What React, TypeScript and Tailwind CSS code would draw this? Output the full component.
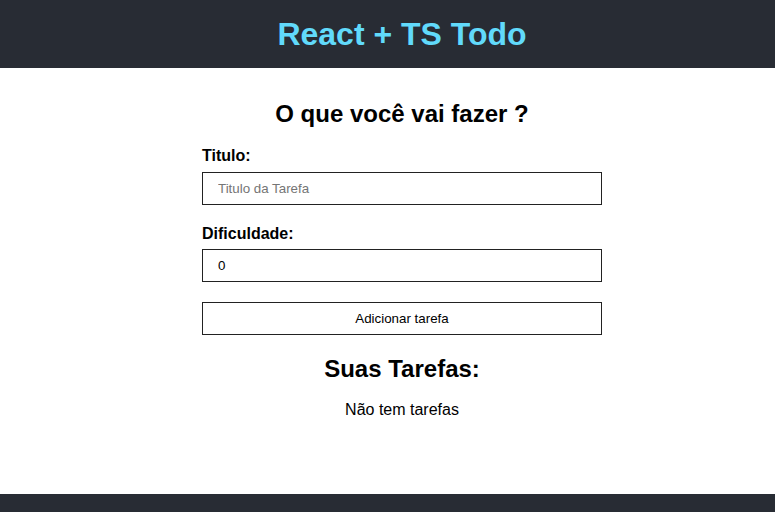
export default function App() {
  return (
    <div className="flex h-[512px] flex-col overflow-hidden font-['Liberation_Sans',Arial,sans-serif] text-black">
      <header className="flex h-[68px] shrink-0 items-center justify-center bg-[#282c34] pl-[29px]">
        <h1 className="text-[32px] font-bold leading-none text-[#61dafb]">React + TS Todo</h1>
      </header>
      <main className="flex h-[426px] shrink-0 flex-col items-center pl-[29px] pt-8">
        <h2 className="text-[24px] font-bold leading-[28px]">O que você vai fazer ?</h2>
        <form className="mt-[19px] flex w-[400px] flex-col" onSubmit={(e) => e.preventDefault()}>
          <label htmlFor="title" className="text-base font-bold leading-[18px]">
            Titulo:
          </label>
          <input
            id="title"
            type="text"
            placeholder="Titulo da Tarefa"
            className="mt-[7px] h-[33px] border border-[#222] px-[15px] text-[13.33px] placeholder:text-[#757575] outline-none"
          />
          <label htmlFor="difficulty" className="mt-5 text-base font-bold leading-[18px]">
            Dificuldade:
          </label>
          <input
            id="difficulty"
            type="text"
            defaultValue="0"
            className="mt-[6px] h-[33px] border border-[#222] px-[15px] text-[13.33px] outline-none"
          />
          <button
            type="submit"
            className="mt-5 h-[33px] border border-[#222] bg-white text-[13.33px]"
          >
            Adicionar tarefa
          </button>
        </form>
        <h2 className="mt-5 text-[24px] font-bold leading-[28px]">Suas Tarefas:</h2>
        <p className="mt-[18px] text-base leading-[18px]">Não tem tarefas</p>
      </main>
      <footer className="flex-1 bg-[#282c34]" />
    </div>
  );
}
